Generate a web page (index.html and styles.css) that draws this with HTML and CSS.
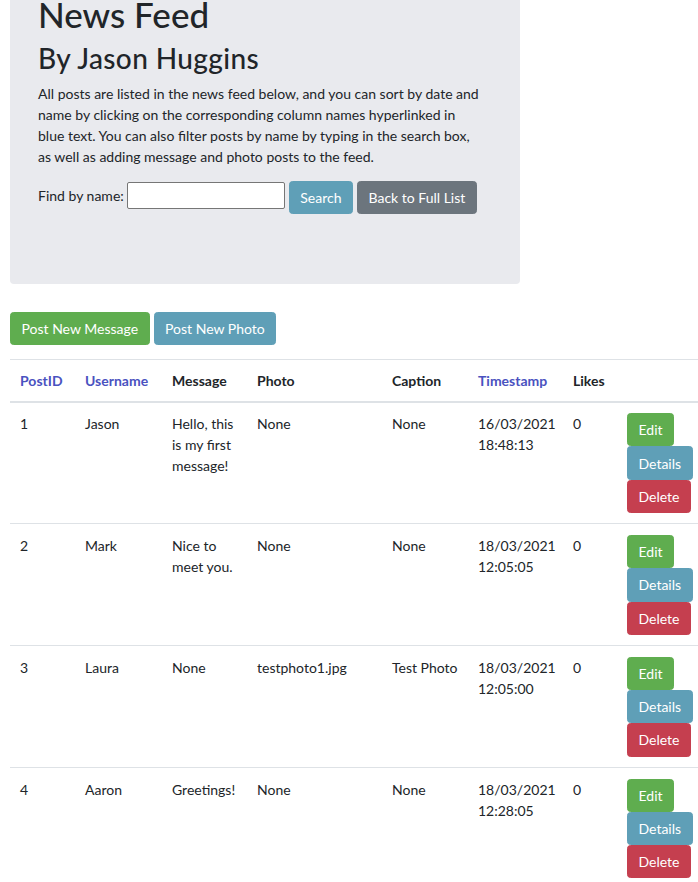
FILE: index.html
```html
<!DOCTYPE html>
<html lang="en">
<head>
<meta charset="utf-8">
<title>News Feed</title>
<link rel="stylesheet" href="styles.css">
</head>
<body>
<div class="page">
  <div class="jumbotron">
    <h1 class="title">News Feed</h1>
    <h2 class="subtitle">By Jason Huggins</h2>
    <p class="lead-text">All posts are listed in the news feed below, and you can sort by date and name by clicking on the corresponding column names hyperlinked in blue text. You can also filter posts by name by typing in the search box, as well as adding message and photo posts to the feed.</p>
    <form class="search-form">
      <label class="search-label" for="q">Find by name:</label>
      <input class="search-input" id="q" type="text">
      <button type="button" class="btn btn-info">Search</button>
      <button type="button" class="btn btn-secondary">Back to Full List</button>
    </form>
  </div>

  <div class="actions">
    <button type="button" class="btn btn-success">Post New Message</button>
    <button type="button" class="btn btn-info">Post New Photo</button>
  </div>

  <table class="feed">
    <colgroup>
      <col class="c-id"><col class="c-user"><col class="c-msg"><col class="c-photo"><col class="c-cap"><col class="c-time"><col class="c-likes"><col class="c-act">
    </colgroup>
    <thead>
      <tr>
        <th><a class="sort-link" href="#">PostID</a></th>
        <th><a class="sort-link" href="#">Username</a></th>
        <th>Message</th>
        <th>Photo</th>
        <th>Caption</th>
        <th><a class="sort-link" href="#">Timestamp</a></th>
        <th>Likes</th>
        <th></th>
      </tr>
    </thead>
    <tbody>
      <tr>
        <td>1</td><td>Jason</td><td>Hello, this<br>is my first<br>message!</td><td>None</td><td>None</td><td>16/03/2021<br>18:48:13</td><td>0</td>
        <td><div class="row-btns"><button class="btn btn-success">Edit</button><button class="btn btn-info">Details</button><button class="btn btn-danger">Delete</button></div></td>
      </tr>
      <tr>
        <td>2</td><td>Mark</td><td>Nice to<br>meet you.</td><td>None</td><td>None</td><td>18/03/2021<br>12:05:05</td><td>0</td>
        <td><div class="row-btns"><button class="btn btn-success">Edit</button><button class="btn btn-info">Details</button><button class="btn btn-danger">Delete</button></div></td>
      </tr>
      <tr>
        <td>3</td><td>Laura</td><td>None</td><td>testphoto1.jpg</td><td>Test Photo</td><td>18/03/2021<br>12:05:00</td><td>0</td>
        <td><div class="row-btns"><button class="btn btn-success">Edit</button><button class="btn btn-info">Details</button><button class="btn btn-danger">Delete</button></div></td>
      </tr>
      <tr>
        <td>4</td><td>Aaron</td><td>Greetings!</td><td>None</td><td>None</td><td>18/03/2021<br>12:28:05</td><td>0</td>
        <td><div class="row-btns"><button class="btn btn-success">Edit</button><button class="btn btn-info">Details</button><button class="btn btn-danger">Delete</button></div></td>
      </tr>
    </tbody>
  </table>
</div>
</body>
</html>
```

FILE: styles.css
```css
* { box-sizing: border-box; }

html, body {
  margin: 0;
  padding: 0;
  background: #fff;
  overflow: hidden;
}

body {
  font-family: Lato, "Open Sans", sans-serif;
  font-size: 14px;
  line-height: 21px;
  color: #212529;
}

.page {
  margin-top: -63px;
  margin-left: 10px;
}

.jumbotron {
  width: 510px;
  background: #e9eaee;
  border-radius: 4px;
  padding: 56px 28px 56px;
  margin-bottom: 28px;
}

.title {
  margin: 0 0 7px;
  font-size: 35px;
  line-height: 42px;
  font-weight: 500;
}

.subtitle {
  margin: 0 0 7px;
  font-size: 28px;
  line-height: 33.6px;
  font-weight: 500;
  letter-spacing: 0.4px;
}

.lead-text {
  margin: 0 0 14px;
  max-width: 444px;
}

.search-form {
  display: flex;
  align-items: flex-start;
  gap: 4px;
  margin: 0 0 14px;
}

.search-label {
  margin-top: 4px;
  margin-right: -1px;
}

.search-input {
  margin-top: 1px;
  width: 158px;
  height: 27px;
  border: 1px solid #767676;
  border-radius: 2px;
  background: #fff;
  padding: 1px 2px;
  font: inherit;
}

.btn {
  display: inline-block;
  font-family: inherit;
  font-size: 14px;
  line-height: 21px;
  padding: 5px 10.5px;
  border: 1px solid transparent;
  border-radius: 3.5px;
  color: #fff;
  cursor: pointer;
  white-space: nowrap;
}

.btn-success { background: #5fad4f; border-color: #5fad4f; }
.btn-info { background: #5f9fb7; border-color: #5f9fb7; }
.btn-secondary { background: #6c757d; border-color: #6c757d; }
.btn-danger { background: #c53f4f; border-color: #c53f4f; }

.actions {
  display: flex;
  gap: 4px;
  margin-bottom: 14px;
}

.feed {
  width: 703px;
  table-layout: fixed;
  border-collapse: collapse;
}

.c-id { width: 65px; }
.c-user { width: 87px; }
.c-msg { width: 85px; }
.c-photo { width: 135px; }
.c-cap { width: 86px; }
.c-time { width: 95px; }
.c-likes { width: 54px; }
.c-act { width: 96px; }

.feed th,
.feed td {
  text-align: left;
  vertical-align: top;
  padding: 10.5px 10px;
  border-top: 1px solid #dee2e6;
  white-space: nowrap;
}

.feed th {
  padding: 10px;
  font-weight: 700;
  border-bottom: 2px solid #dee2e6;
}

.sort-link {
  color: #4a52c0;
  text-decoration: none;
}

.row-btns {
  display: flex;
  flex-direction: column;
  align-items: flex-start;
}

.row-btns .btn {
  padding-top: 5.15px;
  padding-bottom: 5.15px;
}
```
